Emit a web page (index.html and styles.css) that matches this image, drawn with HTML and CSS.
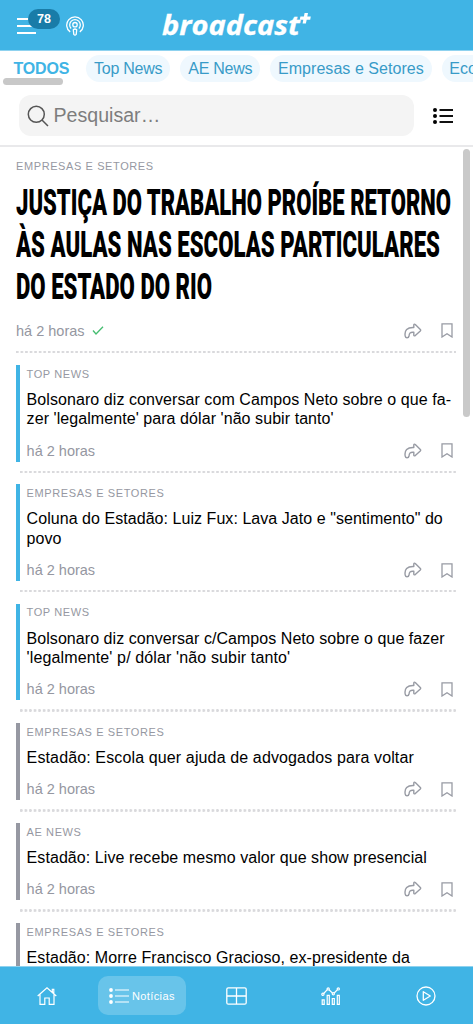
FILE: index.html
```html
<!DOCTYPE html>
<html lang="pt-BR">
<head>
<meta charset="utf-8">
<title>Broadcast+</title>
<link rel="stylesheet" href="styles.css">
</head>
<body>
<svg class="defs" width="0" height="0">
  <symbol id="share" viewBox="0 0 18 16"><path d="M1.200 13.200C.2 7.500 3.200 4.200 9.800 4.500V1.700Q10.300.7 11.300 1.500L16.300 6.500Q17 7.200 16.300 8L11.300 12.600Q10.200 13.200 9.800 12.200V9.300C6 9 5.200 10 5 13.200Q4.800 14.800 3 14.800 1.500 14.800 1.200 13.200Z" fill="none" stroke="#989ba4" stroke-width="1.400" stroke-linejoin="round"/></symbol>
  <symbol id="mark" viewBox="0 0 12 15"><path d="M1 .8h10v13.200L6 10.800 1 14Z" fill="none" stroke="#989ba4" stroke-width="1.300"/></symbol>
</svg>
<div class="app">
  <header class="topbar">
    <div class="menu">
      <svg width="20" height="18" viewBox="0 0 20 18"><path d="M0 2h19M0 9h19M0 16h19" stroke="#fff" stroke-width="2.200"/></svg>
      <span class="badge">78</span>
    </div>
    <svg class="podcast" width="18" height="20" viewBox="0 0 18 20" fill="none" stroke="#fff" stroke-width="1.300"><path d="M4.200 15.900A8.300 8.300 0 1 1 13.800 15.900M5.100 12.500A5.300 5.300 0 1 1 12.900 12.500"/><circle cx="9" cy="8.700" r="2.200"/><path d="M7.300 13.800q1.700-1.600 3.400 0l-.5 4.600q-1.200 1.500-2.400 0Z"/></svg>
    <svg class="logo" width="150" height="34" viewBox="0 0 150 34"><text x="0" y="27" textLength="138" lengthAdjust="spacingAndGlyphs">broadcast</text><path d="M142.600 5h3.400l-.7 3.500h3.500l-.6 3.200h-3.500l-.8 3.800h-3.300l.7-3.800h-3.500l.6-3.200h3.500Z" fill="#fff"/></svg>
  </header>
  <nav class="tabs">
    <span class="tab on">TODOS</span>
    <span class="tab tight">Top News</span>
    <span class="tab tight">AE News</span>
    <span class="tab">Empresas e Setores</span>
    <span class="tab">Economia</span>
    <i class="hthumb"></i>
  </nav>
  <div class="search">
    <div class="field">
      <svg width="22" height="22" viewBox="0 0 22 22" fill="none" stroke="#555" stroke-width="1.500"><circle cx="9.300" cy="9.300" r="8"/><path d="M15 15l6 6"/></svg>
      <span>Pesquisar…</span>
    </div>
    <svg class="list" width="20" height="16" viewBox="0 0 20 16"><path d="M6.500 2H20M6.500 8H20M6.500 14H20" stroke="#111" stroke-width="2"/><g fill="#000"><circle cx="2" cy="2" r="2"/><circle cx="2" cy="8" r="2"/><circle cx="2" cy="14" r="2"/></g></svg>
  </div>
  <main class="feed">
    <article class="lead">
      <div class="cat">EMPRESAS E SETORES</div>
      <svg class="headline" width="440" height="128" viewBox="0 0 440 128">
        <text x="0" y="38" textLength="435" lengthAdjust="spacingAndGlyphs">JUSTIÇA DO TRABALHO PROÍBE RETORNO</text>
        <text x="0" y="80" textLength="424" lengthAdjust="spacingAndGlyphs">ÀS AULAS NAS ESCOLAS PARTICULARES</text>
        <text x="0" y="122" textLength="196" lengthAdjust="spacingAndGlyphs">DO ESTADO DO RIO</text>
      </svg>
      <div class="meta"><span>há 2 horas</span><svg class="check" width="12" height="9" viewBox="0 0 12 9"><path d="M1 4.500 4 8l7-7.300" fill="none" stroke="#45bd70" stroke-width="1.300"/></svg><svg class="share" width="18" height="16"><use href="#share"/></svg><svg class="mark" width="12" height="15"><use href="#mark"/></svg></div>
    </article>
    <div class="dots wide"></div>
    <article class="item">
      <div class="cat">TOP NEWS</div>
      <div class="title">Bolsonaro diz conversar com Campos Neto sobre o que fa-<br>zer 'legalmente' para dólar 'não subir tanto'</div>
      <div class="meta"><span>há 2 horas</span><svg class="share" width="18" height="16"><use href="#share"/></svg><svg class="mark" width="12" height="15"><use href="#mark"/></svg></div>
    </article>
    <div class="dots"></div>
    <article class="item">
      <div class="cat">EMPRESAS E SETORES</div>
      <div class="title snug">Coluna do Estadão: Luiz Fux: Lava Jato e "sentimento" do<br>povo</div>
      <div class="meta"><span>há 2 horas</span><svg class="share" width="18" height="16"><use href="#share"/></svg><svg class="mark" width="12" height="15"><use href="#mark"/></svg></div>
    </article>
    <div class="dots"></div>
    <article class="item">
      <div class="cat">TOP NEWS</div>
      <div class="title snug">Bolsonaro diz conversar c/Campos Neto sobre o que fazer<br><span class="loose">'legalmente' p/ dólar 'não subir tanto'</span></div>
      <div class="meta"><span>há 2 horas</span><svg class="share" width="18" height="16"><use href="#share"/></svg><svg class="mark" width="12" height="15"><use href="#mark"/></svg></div>
    </article>
    <div class="dots"></div>
    <article class="item read">
      <div class="cat">EMPRESAS E SETORES</div>
      <div class="title loose">Estadão: Escola quer ajuda de advogados para voltar</div>
      <div class="meta"><span>há 2 horas</span><svg class="share" width="18" height="16"><use href="#share"/></svg><svg class="mark" width="12" height="15"><use href="#mark"/></svg></div>
    </article>
    <div class="dots"></div>
    <article class="item read">
      <div class="cat">AE NEWS</div>
      <div class="title">Estadão: Live recebe mesmo valor que show presencial</div>
      <div class="meta"><span>há 2 horas</span><svg class="share" width="18" height="16"><use href="#share"/></svg><svg class="mark" width="12" height="15"><use href="#mark"/></svg></div>
    </article>
    <div class="dots"></div>
    <article class="item read">
      <div class="cat">EMPRESAS E SETORES</div>
      <div class="title">Estadão: Morre Francisco Gracioso, ex-presidente da</div>
    </article>
    <i class="vthumb"></i>
  </main>
  <footer class="bottom">
    <div class="cell"><svg width="20" height="20" viewBox="0 0 20 20" fill="none" stroke="#fff" stroke-width="1.200"><path d="M.7 10 10 1.700 19.300 10M15.300 6V3.300h1.500v4.200M3 8.500v9.800h4.800v-6.300h4.400v6.300H17V8.500"/></svg></div>
    <div class="cell"><div class="active"><svg width="20" height="16" viewBox="0 0 20 16"><path d="M6 2h14M6 8h14M6 14h14" stroke="#fff" stroke-width="1.100"/><g fill="#fff"><circle cx="2" cy="2" r="1.900"/><circle cx="2" cy="8" r="1.900"/><circle cx="2" cy="14" r="1.900"/></g></svg><span>Notícias</span></div></div>
    <div class="cell"><svg width="21" height="18" viewBox="0 0 21 18" fill="none" stroke="#fff" stroke-width="1.300"><rect x=".8" y=".8" width="19.400" height="16.400" rx="1.500"/><path d="M10.500 1v16M1 9h19"/></svg></div>
    <div class="cell"><svg width="20" height="18" viewBox="0 0 20 18" fill="none" stroke="#fff" stroke-width="1.200"><path d="M1.200 17.300v-4.500h2v4.500ZM6.200 17.300v-9h2.100v9ZM11.300 17.300v-5.800h2v5.800ZM16.300 17.300V8.300h2v9ZM2.700 6.500l3.600-3.800M8 2.800l3.500 3.300M13.200 6l3.300-3.300"/><circle cx="1.900" cy="7.200" r="1.100"/><circle cx="7.200" cy="1.900" r="1.100"/><circle cx="12.300" cy="6.700" r="1.100"/><circle cx="17.300" cy="1.900" r="1.100"/></svg></div>
    <div class="cell"><svg width="20" height="20" viewBox="0 0 20 20" fill="none" stroke="#fff" stroke-width="1.300"><circle cx="10" cy="10" r="9"/><path d="M7.300 5.700v8.600L14.300 10Z" stroke-linejoin="round"/></svg></div>
  </footer>
</div>
</body>
</html>
```
FILE: styles.css
```css
* { box-sizing: border-box; }
body { margin: 0; font-family: "Liberation Sans", Arial, sans-serif; background: #fff; }
svg { display: block; flex: none; }
.defs { position: absolute; }
.app { width: 473px; height: 1024px; display: flex; flex-direction: column; overflow: hidden; }
.topbar { height: 51px; flex: none; background: #40b4e5; border-bottom: 1px solid #8fd2ef; display: flex; align-items: flex-start; }
.menu { position: relative; margin: 17px 0 0 17px; width: 49px; }
.badge { position: absolute; left: 11px; top: -8px; width: 32px; height: 20px; border-radius: 10px; background: #197ca8; color: #fff; font-weight: bold; font-size: 12.5px; line-height: 20px; text-align: center; }
.podcast { margin-top: 16px; }
.logo { margin: 8px 0 0 78px; }
.logo text { font: italic 700 26px "Open Sans", sans-serif; fill: #fff; stroke: #fff; stroke-width: .3px; }
.tabs { position: relative; height: 37px; flex: none; display: flex; gap: 10px; padding: 4px 0 0 5px; overflow: hidden; }
.tab { flex: none; height: 27px; line-height: 28px; border-radius: 14px; padding: 0 7.700px; font-size: 16px; letter-spacing: .05px; color: #389bc8; background: #eff8fe; }
.tab.tight { letter-spacing: -.25px; padding: 0 8px; }
.tab.on { width: 71px; padding: 0 0 0 8.500px; letter-spacing: -.2px; background: none; font-weight: bold; color: #40b4e5; }
.hthumb { position: absolute; left: 3px; top: 27px; width: 60px; height: 7px; border-radius: 4px; background: #c8c8c8; }
.search { height: 59px; flex: none; border-bottom: 2px solid #e9e9eb; display: flex; padding: 7px 20px 0 18.500px; justify-content: space-between; }
.field { width: 395px; height: 41px; border-radius: 12px; background: #f4f4f4; display: flex; align-items: center; padding-left: 8px; gap: 5px; color: #7d7d7d; font-size: 19.600px; }
.list { margin-top: 13px; }
.feed { position: relative; height: 819px; flex: none; overflow: hidden; padding: 11px 17px 0 16px; }
.vthumb { position: absolute; left: 463px; top: 2px; width: 7px; height: 268px; border-radius: 4px; background: #c9c9c9; }
.cat { font-size: 11px; line-height: 17px; letter-spacing: .6px; color: #9698a2; }
.item .cat { position: relative; top: .6px; }
.headline { margin-top: 2px; }
.headline text { font: 900 37px Roboto, sans-serif; fill: #000; }
.meta { display: flex; align-items: center; height: 21.500px; color: #9597a1; font-size: 14.500px; }
.lead .meta { margin-top: 15px; }
.check { margin-left: 7px; }
.share { margin-left: auto; margin-right: 19px; }
.mark { margin-right: 3px; }
.dots { height: 2.500px; margin: 9px 0 11.300px 4px; background: radial-gradient(circle at 1.300px 1.250px, #d9d9dc 1.100px, transparent 1.500px) 0 0 / 4.570px 2.500px; }
.dots.wide { margin: 9.300px 0 11.800px 0; }
.item { border-left: 4px solid #40b4e5; padding-left: 6.600px; height: auto; }
.item.read { border-color: #9698a2; }
.title { margin-top: 8px; font-size: 16px; line-height: 19.300px; color: #000; letter-spacing: .07px; white-space: nowrap; }
.title.snug { letter-spacing: .05px; }
.title.loose, .title .loose { letter-spacing: .13px; }
.item .meta { margin-top: 11.400px; }
.bottom { height: 58px; flex: none; background: #40b4e5; border-top: 1px solid #8fd2ef; display: flex; }
.cell { flex: 1; display: flex; align-items: center; justify-content: center; }
.active { width: 88px; height: 39px; flex: none; border-radius: 10px; background: #68c4ea; display: flex; align-items: center; justify-content: center; gap: 3px; color: #fff; font-size: 11px; letter-spacing: .4px; }
```
